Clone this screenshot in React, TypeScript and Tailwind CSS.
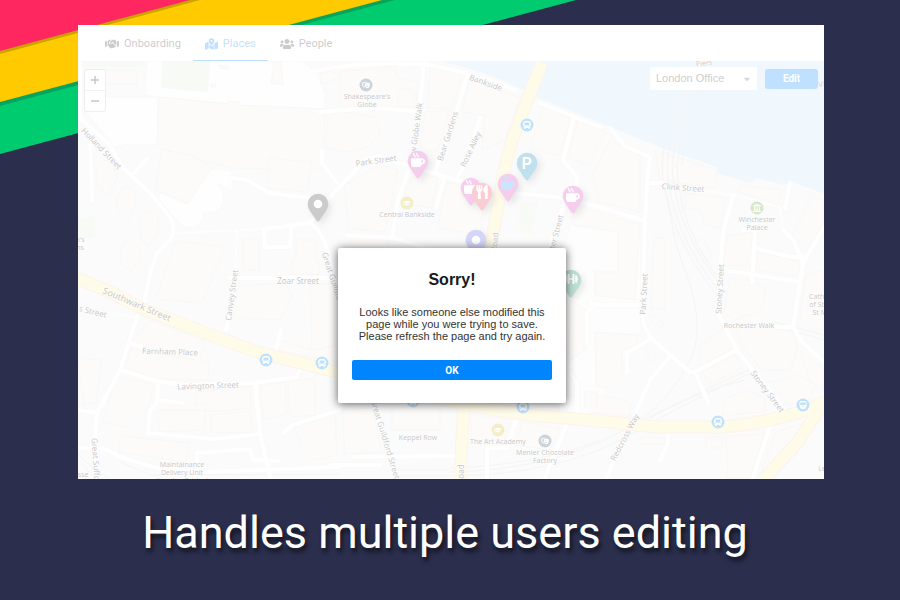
import type { ReactNode } from 'react';
import type { IconType } from 'react-icons';
import {
  FaBus,
  FaCaretDown,
  FaDumbbell,
  FaGraduationCap,
  FaHandshake,
  FaLandmark,
  FaMapMarkedAlt,
  FaMugHot,
  FaTheaterMasks,
  FaTrain,
  FaUsers,
  FaUtensils,
} from 'react-icons/fa';

const NAV_LINKS = [
  { title: 'Onboarding', url: '#onboarding', icon: FaHandshake, iconWidth: 'w-[14px]' },
  { title: 'Places', url: '#places', icon: FaMapMarkedAlt, iconWidth: 'w-[13px]', active: true },
  { title: 'People', url: '#people', icon: FaUsers, iconWidth: 'w-[14px]' },
];

const WATER =
  'M440 61 Q480 70 515 86 L543 100 L600 123 L667 150 L717 167 V173 L750 183 L757 178 L783 185 L790 182 L810 188 L824 194 V61Z';

const PARKS = [
  'M162 61 H210 L208 92 L161 88Z',
  'M78 61 H147 V67 H78Z',
  'M78 217 H95 V238 H78Z',
  'M520 203 H538 L531 234 L519 230Z',
];

const PLAZAS = [
  'M147 61 H302 L318 75 L325 95 V115 L230 104 L158 97 L145 95Z',
  'M96 97 L158 97 L157 145 L130 144 L115 147 L84 110Z',
  'M212 169 L232 171 V190 L217 184 Q228 195 221 208 Q214 214 204 213 Q203 228 187 228 Q182 228 157 197 L162 193 L188 205 Q198 183 212 169Z',
];

const BUILDINGS = [
  'M159 97 L228 104 V101 L239 102 V105 L325 109 L322 170 L232 168 L200 160 L157 147Z',
  'M90 70 H137 V84 H90Z',
  'M274 61 H281 L283 84 H271Z M219 65 L228 66 V69 L219 68Z M211 84 H216 V87 H211Z',
  'M161 150 L190 155 L212 168 L188 203 L156 190Z',
  'M105 160 L113 163 L117 178 L108 196 L98 188 L96 170Z',
  'M124 186 L134 190 L136 205 L128 220 L118 213 L117 197Z',
  'M147 210 L157 216 L159 232 L149 247 L141 238 L140 220Z',
  'M128 238 L138 246 L141 258 L131 272 L121 264 L120 250Z',
  'M269 158 L312 162 L307 192 L267 188Z',
  'M176 241 L225 247 L202 303 L155 299Z',
  'M243 239 L259 239 V270 H243Z M296 240 H316 V262 H319 V274 H292 V258 H296Z',
  'M239 286 L285 283 L293 296 L280 320 L232 318Z',
  'M310 284 H334 V345 L312 350Z',
  'M150 320 L205 341 L200 362 L128 345Z',
  'M131 349 L208 362 L209 380 L158 379 L125 367Z',
  'M78 358 L102 360 L96 402 L84 405Z',
  'M116 376 L154 385 L148 408 L127 427 L103 422Z',
  'M158 410 H205 V430 L159 432Z M211 415 L250 411 L252 432 L211 433Z',
  'M196 392 L250 386 L251 408 L206 412 V404 H196Z',
  'M120 436 L190 443 L186 462 L118 452Z',
  'M260 386 L285 382 L287 414 L264 419Z M288 381 L315 379 V415 L290 417Z',
  'M294 427 L335 415 L337 455 L315 460 L302 447Z',
  'M278 340 L315 351 L338 345 V362 L280 351Z',
  'M320 74 L334 70 L338 78 L322 84Z M340 72 L395 66 L397 78 L418 82 L416 106 L345 108 L340 100Z',
  'M328 116 Q345 108 376 118 L380 130 Q374 150 345 152 L326 148Z',
  'M398 91 Q413 84 414 96 V107 H398Z',
  'M430 66 Q444 62 462 74 L452 108 H428Z M425 112 L450 110 L437 152 L420 148Z',
  'M470 78 L520 98 L505 140 L482 150 L485 115 L462 112Z',
  'M543 106 L570 118 L560 155 L530 148Z M578 120 L605 132 L588 165 L568 158Z',
  'M414 171 L438 178 L432 208 L402 203Z M446 182 L486 192 L480 235 L438 228Z',
  'M345 185 L380 165 L398 170 L385 232 L348 228Z',
  'M350 240 H390 L388 247 H352Z',
  'M575 205 L640 224 L635 300 L595 295 V272 H618 V232 L572 225Z',
  'M610 140 L640 156 L640 212 L600 202 L592 175Z',
  'M655 150 L717 170 L715 188 L660 180Z M685 193 L725 198 L720 228 L704 224 L700 210 L685 208Z',
  'M654 238 H665 V309 H651Z M695 242 L704 238 L712 258 L703 261Z',
  'M740 184 L752 187 L782 190 L778 204 L738 192Z',
  'M728 236 L752 232 L752 265 L722 266Z M758 251 L800 262 L797 276 L756 270Z',
  'M730 278 L748 280 L766 288 L762 310 L735 320 L724 312Z',
  'M812 196 L824 200 V222 L808 250 L792 235Z M806 275 L824 270 V338 L800 318Z',
  'M595 332 L637 335 L638 345 L622 350 V372 L606 388 L596 386Z',
  'M648 317 L655 315 L664 325 L657 329Z M645 351 L650 348 L657 357 L651 362Z',
  'M700 345 L728 325 L734 347 L700 367Z M702 372 L735 355 L742 368 L712 384Z',
  'M735 322 L792 332 L798 347 L790 370 L762 370 L742 345Z',
  'M724 400 L745 390 L765 398 V412 L722 415Z',
  'M770 382 L800 375 L815 385 L810 400 L788 405Z M800 350 L824 370 V392 L810 380Z',
  'M590 393 L630 402 V416 L592 412Z M640 437 L665 438 V444 H640Z M706 437 L722 437 V448 H706Z',
  'M726 436 L764 434 L750 478 H728Z M776 432 L815 420 L790 455 L762 470Z',
  'M570 300 L590 312 L585 350 L568 362Z M585 392 H597 V408 H585Z',
  'M470 414 L510 420 L504 440 L472 440Z M392 408 H440 V430 H392Z',
  'M522 422 L560 428 L550 450 L515 445Z',
  'M342 410 L372 408 L382 452 L345 454Z',
];

const ROADS = [
  'M310 72 Q365 60 430 65 Q470 72 515 90',
  'M540 103 L600 127',
  'M610 128 L625 146 L650 157 L647 183 L645 227 L642 313 Q643 330 655 342 L690 372 H695 L737 350',
  'M574 117 L563 160 L577 177 L575 197',
  'M565 200 L550 247',
  'M424 63 L420 103 L412 165',
  'M467 76 L457 110 L435 172 L444 180 L436 208',
  'M480 118 L468 155 L457 180',
  'M320 112 L370 108 L413 111',
  'M310 223 L330 197 L367 158 L380 157 L413 167 L457 180 L493 192 L537 195 L563 198 L600 207 L642 220',
  'M410 167 L398 200 L392 238 M347 235 L393 238 L423 247',
  'M322 150 V163 L337 183',
  'M80 63 V118 L110 145 L123 168 L150 193 L170 217 Q177 230 170 240 L157 253 L150 273 L145 300 L137 317 L120 370 L97 413 L95 437 L98 479',
  'M132 175 L148 158',
  'M90 130 L92 200',
  'M263 229 L310 223 Q322 230 328 253 L333 277 L373 403 L397 479',
  'M230 278 H333 M226 330 L232 305',
  'M264 229 L265 247 H290 L291 228',
  'M232 178 L247 180 L270 193 L310 198',
  'M120 370 L157 381 L183 385 L253 383 L297 377 L300 368',
  'M130 343 L142 347',
  'M255 382 L260 433 L270 477',
  'M158 382 L157 403 L150 410 L148 433 L213 439 L260 434 M157 400 L183 403',
  'M283 433 L293 425 L340 410',
  'M78 448 H103 L123 458 L157 468 L203 472 L340 467',
  'M197 470 V453 L250 449 L253 460 L278 461',
  'M78 410 L97 413',
  'M353 457 L455 456 M330 465 H380',
  'M517 417 L507 448 H487 V479',
  'M567 423 L545 477',
  'M670 357 L650 380 L637 410 L607 477',
  'M652 338 L627 353 V373 M695 372 L708 402',
  'M668 432 V443 L660 460 M770 427 L753 477',
  'M590 300 L593 305 H638',
  'M577 413 V383 L570 373 M587 343 V313 L597 303',
  'M733 195 L723 233 L720 270 L718 313 L737 350 L787 413',
  'M647 183 H663',
  'M723 270 L800 282 M755 232 L752 283 M755 248 L790 257 L803 257 M743 230 H755',
  'M824 227 L803 263 L800 283 L793 327 L803 343 L824 362',
  'M783 230 L793 240 L803 263 M775 327 H793',
  'M790 183 L785 208',
  'M276 350 L281 330',
];

const FOOTPATHS = [
  'M177 233 L263 229',
  'M237 230 L235 273',
  'M663 185 L733 195 L780 207 L783 230',
  'M108 312 L137 318',
];

const MAIN_ROADS = [
  'M824 402 L797 443 L763 480',
  'M542 63 L530 93 L517 127 Q508 150 503 177 L495 223 L465 380 L460 480',
  'M70 275 L110 292 L143 309 L203 332 L257 352 L337 372 L420 395 L490 409 L530 415 L600 421 L657 427 L723 427 Q760 424 797 413 L830 400',
];

const RAILS = [
  'M683 90 Q664 130 662 165 Q664 230 720 300',
  'M688 90 Q670 130 667 165 Q669 230 723 297',
  'M690 90 Q676 130 672 165 Q674 230 727 293',
  'M697 90 Q681 130 677 165 Q678 225 720 280',
  'M704 90 Q685 130 682 165',
  'M667 193 Q673 245 688 278 Q705 330 690 360 Q670 400 640 420',
  'M450 476 Q560 475 630 435 Q690 400 757 370',
  'M450 472 Q550 470 620 432 Q690 396 757 366',
  'M450 468 Q540 465 600 440 M650 418 Q700 390 745 380',
  'M397 470 H450 M400 476 H450',
  'M78 454 Q90 468 110 479 M78 460 L96 479 M120 462 L150 475 L340 474',
  'M775 322 L824 335 M790 330 L824 340',
];

type MapLabel = { text: string; x: number; y: number; angle?: number; size?: number };

const LABELS: MapLabel[] = [
  { text: 'Holland Street', x: 102, y: 148, angle: 46 },
  { text: 'Southwark Street', x: 137, y: 304, angle: 23, size: 9 },
  { text: 's Street', x: 93, y: 311, angle: 14 },
  { text: 'Farnham Place', x: 170, y: 351, angle: 2 },
  { text: 'Lavington Street', x: 208, y: 385, angle: -2 },
  { text: 'Canvey Street', x: 231, y: 295, angle: -82 },
  { text: 'Zoar Street', x: 298, y: 280 },
  { text: 'Great Suffolk St', x: 97, y: 467, angle: 86 },
  { text: 'Park Street', x: 376, y: 160, angle: -8 },
  { text: 'Great Guildford', x: 334, y: 280, angle: 72 },
  { text: 'Great Guildford Street', x: 386, y: 439, angle: 73 },
  { text: 'New Globe Walk', x: 415, y: 133, angle: -82 },
  { text: 'Bear Gardens', x: 447, y: 136, angle: -72 },
  { text: 'Rose Alley', x: 470, y: 149, angle: -65 },
  { text: 'Bankside', x: 486, y: 82, angle: 20 },
  { text: 'Road', x: 494, y: 242, angle: -84 },
  { text: 'Road', x: 460, y: 474, angle: -90 },
  { text: 'Keppel Row', x: 418, y: 437, size: 7 },
  { text: 'Porter Street', x: 554, y: 238, angle: -75 },
  { text: 'Clink Street', x: 683, y: 187, angle: 4 },
  { text: 'Park Street', x: 643, y: 294, angle: -87 },
  { text: 'Stoney Street', x: 719, y: 289, angle: -87 },
  { text: 'Rochester Walk', x: 749, y: 325, size: 7 },
  { text: 'Stoney Street', x: 768, y: 391, angle: 53 },
  { text: 'Redcross Way', x: 624, y: 437, angle: -62 },
  { text: 'Piers', x: 704, y: 63, angle: -8, size: 7 },
  { text: 'Vine', x: 826, y: 83, angle: -8 },
  { text: "Shakespeare's", x: 367, y: 96, size: 7 },
  { text: 'Globe', x: 367, y: 104, size: 7 },
  { text: 'Central Bankside', x: 407, y: 214, size: 7 },
  { text: 'Winchester', x: 757, y: 219, size: 7 },
  { text: 'Palace', x: 757, y: 227, size: 7 },
  { text: 'The Art Academy', x: 498, y: 441, size: 7 },
  { text: 'Menier Chocolate', x: 545, y: 452, size: 7 },
  { text: 'Factory', x: 545, y: 460, size: 7 },
  { text: 'Maintainance', x: 182, y: 464, size: 7 },
  { text: 'Delivery Unit', x: 182, y: 472, size: 7 },
  { text: '(London Bridge)', x: 182, y: 480, size: 7 },
  { text: 'Cathedral', x: 825, y: 296, size: 7 },
  { text: 'of St Mary', x: 826, y: 304, size: 7 },
  { text: 'St Mary', x: 825, y: 312, size: 7 },
  { text: "n's", x: 80, y: 239, size: 7 },
  { text: 'ns', x: 80, y: 247, size: 7 },
  { text: 'sse', x: 83, y: 474, size: 7 },
  { text: 'Le', x: 822, y: 468, size: 7 },
];

const POIS: { x: number; y: number; color: string; icon: IconType }[] = [
  { x: 366, y: 85, color: '#3a5468', icon: FaTheaterMasks },
  { x: 545, y: 441, color: '#3a5468', icon: FaTheaterMasks },
  { x: 407, y: 203, color: '#d0ba1e', icon: FaGraduationCap },
  { x: 498, y: 430, color: '#d0ba1e', icon: FaGraduationCap },
  { x: 757, y: 208, color: '#5fa32b', icon: FaLandmark },
  { x: 527, y: 125, color: '#0089f0', icon: FaBus },
  { x: 266, y: 360, color: '#0089f0', icon: FaBus },
  { x: 322, y: 363, color: '#0089f0', icon: FaBus },
  { x: 413, y: 401, color: '#0089f0', icon: FaBus },
  { x: 523, y: 407, color: '#0089f0', icon: FaBus },
  { x: 718, y: 422, color: '#0089f0', icon: FaBus },
  { x: 803, y: 405, color: '#0089f0', icon: FaTrain },
];

type MapPin = {
  x: number;
  y: number;
  color: string;
  icon?: IconType;
  iconColor?: string;
  letter?: string;
};

const PINS: MapPin[] = [
  { x: 318, y: 204, color: '#333333' },
  { x: 418, y: 161, color: '#d83cb8', icon: FaMugHot },
  { x: 527, y: 163, color: '#0584bd', letter: 'P' },
  { x: 508, y: 184, color: '#d83cb8', icon: FaMugHot, iconColor: '#2c9bf2' },
  { x: 471, y: 188, color: '#d83cb8', icon: FaMugHot },
  { x: 482, y: 193, color: '#ec3a55', icon: FaUtensils },
  { x: 573, y: 196, color: '#d83cb8', icon: FaMugHot },
  { x: 476, y: 240, color: '#5559df' },
  { x: 571, y: 280, color: '#038153', icon: FaDumbbell },
];

const Pin = ({ x, y, color, icon: Icon, iconColor = '#fff', letter }: MapPin) => (
  <g
    transform={`translate(${x} ${y})`}
    className="drop-shadow-[3px_3px_3px_rgba(0,0,0,0.35)]"
  >
    <path
      d="M0 17.5 C-1 17.5 -1.5 16.5 -2 15.8 C-8.6 6.2 -10.3 4 -10.3 0 A10.3 10.3 0 0 1 10.3 0 C10.3 4 8.6 6.2 2 15.8 C1.5 16.5 1 17.5 0 17.5Z"
      fill={color}
    />
    {Icon && <Icon x={-7} y={-8} size={14} color={iconColor} />}
    {letter && (
      <text
        textAnchor="middle"
        y="6"
        fill="#fff"
        className="font-['Roboto',sans-serif] text-[16px] font-bold"
      >
        {letter}
      </text>
    )}
    {!Icon && !letter && <circle r="4.3" fill="#fff" />}
  </g>
);

const StreetMap = () => (
  <svg
    viewBox="78 61 746 418"
    preserveAspectRatio="xMidYMid slice"
    className="absolute inset-0 size-full bg-[#eeeeef]"
    role="img"
    aria-label="Map of Southwark, London"
  >
    <g fill="#fbfbfb" stroke="#e8e8e8">
      {PLAZAS.map((d) => (
        <path key={d} d={d} />
      ))}
    </g>
    <path d="M580 200 L640 218 V330 L590 415 H560 V260Z" fill="#f7f7f5" />
    <g fill="#f1eeea" stroke="#e4e1dc" strokeWidth="1">
      {BUILDINGS.map((d) => (
        <path key={d} d={d} />
      ))}
    </g>
    <g fill="#e3ecd8">
      {PARKS.map((d) => (
        <path key={d} d={d} />
      ))}
    </g>
    <path d={WATER} fill="#c3e1fb" />
    <g fill="none" stroke="#d4d4d4" strokeWidth="1">
      {RAILS.map((d) => (
        <path key={d} d={d} />
      ))}
    </g>
    <g fill="none" strokeLinejoin="round" strokeLinecap="round">
      <g stroke="#e6e6e6" strokeWidth="5">
        {ROADS.map((d) => (
          <path key={d} d={d} />
        ))}
      </g>
      <g stroke="#ffffff" strokeWidth="4">
        {ROADS.map((d) => (
          <path key={d} d={d} />
        ))}
      </g>
    </g>
    <g fill="none" stroke="#ffffff" strokeWidth="2" strokeDasharray="2 1">
      {FOOTPATHS.map((d) => (
        <path key={d} d={d} />
      ))}
    </g>
    <g fill="none" strokeLinejoin="round">
      <g stroke="#f7cdb4" strokeWidth="13">
        {MAIN_ROADS.map((d) => (
          <path key={d} d={d} />
        ))}
      </g>
      <g stroke="#ffefa8" strokeWidth="11">
        {MAIN_ROADS.map((d) => (
          <path key={d} d={d} />
        ))}
      </g>
    </g>
    <g
      fill="#222"
      stroke="#f6f6f6"
      strokeWidth="1"
      paintOrder="stroke"
      textAnchor="middle"
      dominantBaseline="central"
      className="font-['Noto_Sans',sans-serif]"
    >
      {LABELS.map(({ text, x, y, angle = 0, size = 8 }) => (
        <text
          key={`${text}-${x}`}
          transform={`translate(${x} ${y}) rotate(${angle})`}
          fontSize={size}
        >
          {text}
        </text>
      ))}
    </g>
    {POIS.map(({ x, y, color, icon: Icon }) => (
      <g key={`${x}-${y}`}>
        <circle cx={x} cy={y} r="6.5" fill={color} />
        <Icon x={x - 4} y={y - 4} size={8} color="#fff" />
      </g>
    ))}
    {PINS.map((pin) => (
      <Pin key={`${pin.x}-${pin.y}`} {...pin} />
    ))}
  </svg>
);

const Stripes = () => (
  <svg className="absolute top-0 left-0" width="600" height="160" aria-hidden="true">
    <path d="M0 0H576L0 154Z" fill="#00cc6f" />
    <path d="M0 0H395L0 106Z" fill="#06a45c" />
    <path d="M0 0H382L0 102Z" fill="#ffcb00" />
    <path d="M0 0H200L0 54Z" fill="#cca300" />
    <path d="M0 0H190L0 51Z" fill="#ff275f" />
  </svg>
);

const Header = () => (
  <header className="h-9 px-[15px] bg-white">
    <nav className="flex h-full">
      {NAV_LINKS.map(({ title, url, icon: Icon, iconWidth, active }) => (
        <a
          key={url}
          href={url}
          className={`flex items-center gap-[5px] px-3 pt-[3px] border-b text-[11px] ${
            active ? 'border-[#0085ff] text-[#0085ff]' : 'border-transparent text-[#333]'
          }`}
        >
          <Icon className={`h-3 ${iconWidth}`} />
          {title}
        </a>
      ))}
    </nav>
  </header>
);

const MapControls = () => (
  <>
    <div className="absolute top-2 left-[6px] flex flex-col w-[22px] rounded-xs border border-[#bbb] bg-white text-[#222]">
      <button type="button" aria-label="Zoom in" className="h-[21px] border-b border-[#ccc]">
        <svg viewBox="0 0 20 20" className="mx-auto size-5" stroke="currentColor" strokeWidth="1.5">
          <path d="M6 10H14M10 6V14" />
        </svg>
      </button>
      <button type="button" aria-label="Zoom out" className="h-5">
        <svg viewBox="0 0 20 20" className="mx-auto size-5" stroke="currentColor" strokeWidth="1.5">
          <path d="M6 10H14" />
        </svg>
      </button>
    </div>
    <div className="absolute top-[6px] right-[6px] flex items-center gap-2">
      <div className="relative">
        <select
          aria-label="Office"
          className="block appearance-none w-[107px] h-[23px] px-[6px] bg-white text-[11px] text-[#333] font-['Liberation_Sans',sans-serif]"
        >
          <option>London Office</option>
        </select>
        <FaCaretDown className="absolute top-[7px] right-[5px] size-[10px] text-[#666] pointer-events-none" />
      </div>
      <button
        type="button"
        className="w-[53px] h-5 rounded-[3px] bg-[#0085ff] text-white text-[10px] font-bold"
      >
        Edit
      </button>
    </div>
  </>
);

const Dialog = ({ title, children }: { title: string; children: ReactNode }) => (
  <div className="absolute inset-0 flex items-start justify-center pt-[223px] pl-[2px] bg-white/75">
    <div
      role="alertdialog"
      aria-labelledby="dialog-title"
      aria-describedby="dialog-text"
      className="w-[228px] px-[14px] pt-[22px] pb-[22px] rounded-xs bg-white text-center text-[#333] shadow-[0_1px_10px_rgba(0,0,0,0.65)] font-['Liberation_Sans',sans-serif]"
    >
      <h2 id="dialog-title" className="text-base leading-5 font-bold text-[#1a1a1a]">
        {title}
      </h2>
      <p id="dialog-text" className="mt-4 text-[11px] leading-3">
        {children}
      </p>
      <button
        type="button"
        className="mt-[18px] w-full h-5 rounded-[2px] bg-[#0085ff] text-white text-[10px] font-bold font-['Roboto',sans-serif]"
      >
        OK
      </button>
    </div>
  </div>
);

const App = () => {
  return (
    <main className="relative flex flex-col min-h-screen pt-[25px] bg-[#2b2e4c] font-['Roboto',sans-serif]">
      <Stripes />

      <section className="relative flex flex-1 flex-col ml-[78px] mr-[76px]">
        <Header />
        <div className="relative flex-1 min-h-[360px] overflow-hidden">
          <StreetMap />
          <MapControls />
        </div>
        <Dialog title="Sorry!">
          Looks like someone else modified this page while you were trying to save. Please refresh
          the page and try again.
        </Dialog>
      </section>

      <h1 className="pt-[26px] pb-[39px] pr-[10px] text-center text-[45px] leading-14 text-white [text-shadow:2px_4px_4px_rgba(0,0,0,0.6)]">
        Handles multiple users editing
      </h1>
    </main>
  );
};

export default App;
